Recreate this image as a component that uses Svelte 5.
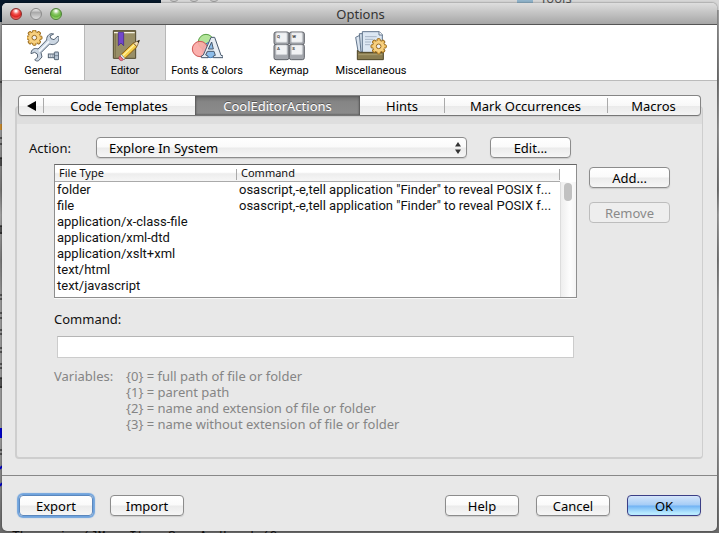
<script>
  const tabs = [
    { name: 'Code Templates', share: 152 },
    { name: 'CoolEditorActions', share: 165 },
    { name: 'Hints', share: 84 },
    { name: 'Mark Occurrences', share: 163 },
    { name: 'Macros', share: 93 }
  ];
  const categories = ['General', 'Editor', 'Fonts & Colors', 'Keymap', 'Miscellaneous'];
  const reveal = 'osascript,-e,tell application "Finder" to reveal POSIX f...';
  const rows = [
    ['folder', reveal],
    ['file', reveal],
    ['application/x-class-file', ''],
    ['application/xml-dtd', ''],
    ['application/xslt+xml', ''],
    ['text/html', ''],
    ['text/javascript', ''],
    ['text/x-java', '']
  ];
  const variables = [
    '{0} = full path of file or folder',
    '{1} = parent path',
    '{2} = name and extension of file or folder',
    '{3} = name without extension of file or folder'
  ];
  const keys = [['Q', 342, 96], ['W', 388, 96], ['A', 342, 133], ['S', 388, 133]];
  const teeth = [0, 45, 90, 135, 180, 225, 270, 315];

  let selectedTab = $state('CoolEditorActions');
  let selectedCategory = $state('Editor');
  let command = $state('');
</script>

{#snippet gear(cx, cy)}
  <g transform="translate({cx} {cy})" stroke="#9a6a1c" stroke-width="3">
    {#each teeth as a}
      <rect x="-5" y="-23" width="10" height="12" rx="3" fill="#f3c566" transform="rotate({a})" />
    {/each}
    <circle r="17" fill="#f7d080" stroke="none" />
    <circle r="7" fill="#eef1f5" stroke-width="3" />
  </g>
{/snippet}

<div class="desktop">
  <div class="backdrop" aria-hidden="true">
    <div class="dark"></div>
    <div class="dots"><i></i><i></i><i></i></div>
    <div class="folder"></div>
    <span class="tools">Tools</span>
    <svg class="edge" viewBox="0 0 2 533">
      <path d="M0 82h2M0 138h2M0 144h2M1 158v8M0 158h2M1 226v8M0 226h2M0 233h2M0 295h2M0 299h2M0 313h2M0 318h2M0 330h2M0 334h2M0 348h2M0 352h2M0 364h2M0 368h2M1 378v10M0 378h2M0 387h2M0 450h2M0 454h2" stroke="#111" />
      <path d="M0 124h2v6h-2z" fill="#c98a2c" />
      <path d="M0 430h2M1 428v10M0 469l2-3M0 486l2-3" stroke="#00c" stroke-width="2" />
    </svg>
    <span class="code">The main (JMenuItem SaveAndLoad (2</span>
  </div>

  <main class="window">
    <header class="titlebar">
      <div class="lights">
        <button class="light red" aria-label="Close"></button>
        <button class="light grey" aria-label="Minimize"></button>
        <button class="light green" aria-label="Zoom"></button>
      </div>
      <h1>Options</h1>
    </header>

    <nav class="toolbar">
      {#each categories as name}
        <button class="category" class:active={selectedCategory === name} onclick={() => (selectedCategory = name)}>
          {#if name === 'General'}
            <svg viewBox="81 90 96 96">
              {@render gear(103, 113)}
              <path d="M116 182 L126 171 L123 158 L149 132 C158 136 170 134 176 121 C178 115 177 110 174 108 L162 119 L153 116 L150 108 L161 102 C150 98 139 107 140 120 L114 147 C103 142 93 149 93 161 L104 157 L112 162 L113 171 L104 180 C108 183 112 184 116 182Z" fill="#cbd6e2" stroke="#566474" stroke-width="3" stroke-linejoin="round" />
              <path d="M117 154 L147 124" stroke="#f4f8fc" stroke-width="5" />
              <rect x="145" y="162" width="18" height="11" fill="#dde4ec" stroke="#566474" stroke-width="3" />
              <path d="M151 162v11M157 162v11" stroke="#75818f" stroke-width="2" />
              <rect x="163" y="156" width="13" height="23" rx="2" fill="#b9c7d6" stroke="#566474" stroke-width="3" />
              <path d="M165 167h10" stroke="#566474" stroke-width="2" />
            </svg>
          {:else if name === 'Editor'}
            <svg viewBox="327 90 96 96">
              <path d="M340 92h67v83h-67z" fill="#988e66" stroke="#50482c" stroke-width="3" />
              <path d="M342 98h62" stroke="#f4f1e2" stroke-width="4" />
              <path d="M342 94h64" stroke="#6f6746" stroke-width="3" />
              <path d="M346 101v72" stroke="#7b724e" stroke-width="3" />
              <path d="M355 97h16v40l-8-8-8 8z" fill="#7246cc" stroke="#3b1f86" stroke-width="2" />
              <path d="M361 166 L400 129 L411 140 L372 178Z" fill="#f7cf4a" stroke="#8a5d14" stroke-width="3" />
              <path d="M367 169 L403 134" stroke="#fff0a0" stroke-width="4" />
              <path d="M400 129 L418 121 L411 140Z" fill="#f3dfb4" stroke="#6b4a18" stroke-width="2" />
              <path d="M411 124 L419 120 L416 129Z" fill="#222" />
              <path d="M364 163 L375 175 L370 180 L360 168Z" fill="#dfe3ea" stroke="#70747c" stroke-width="2" />
              <path d="M360 168 L370 179 C365 184 358 182 357 176 C356 172 357 170 360 168Z" fill="#ef7586" stroke="#a43648" stroke-width="2" />
            </svg>
          {:else if name === 'Fonts & Colors'}
            <svg viewBox="90 90 96 96">
              <circle cx="135" cy="126" r="23" fill="#b3e59a" stroke="#58a044" stroke-width="3" />
              <circle cx="148" cy="150" r="23" fill="#8dbdea" stroke="#3e78b4" stroke-width="3" />
              <circle cx="117" cy="147" r="23" fill="#fba9a6" fill-opacity=".92" stroke="#cf5856" stroke-width="3" />
              <path d="M150 112h11l19 54 6 2v5h-29v-5l6-2-4-12h-20l-5 11 7 3v5h-20v-5l6-3z M152 126l-10 21h15z" fill="#e7edf4" fill-rule="evenodd" stroke="#495a6e" stroke-width="3" stroke-linejoin="round" />
            </svg>
          {:else if name === 'Keymap'}
            <svg viewBox="339 90 96 96">
              {#each keys as [k, x, y]}
                <rect {x} {y} width="45" height={y > 100 ? 46 : 38} rx="6" fill="#a5a8ae" stroke="#62656b" stroke-width="3" />
                <rect x={x + 6} y={y + 2} width="33" height="29" rx="3" fill="#f1f2f4" stroke="#c9cbd0" stroke-width="2" />
                <text x={x + 9} y={y + 17} font-size="13" font-weight="700" fill="#444">{k}</text>
              {/each}
            </svg>
          {:else}
            <svg viewBox="585 90 96 96">
              <path d="M587 112l14-7 10 54h-16z" fill="#dbe5f0" stroke="#62758c" stroke-width="3" />
              <path d="M598 101h20v55h-15z" fill="#d0dce9" stroke="#62758c" stroke-width="3" />
              <path d="M607 95h51l9 9v54h-60z" fill="#dce7f3" stroke="#62758c" stroke-width="3" />
              <path d="M657 95v10h11" fill="#fff" stroke="#62758c" stroke-width="3" />
              <path d="M615 110h35M615 118h25M615 126h18M615 134h15" stroke="#a7b5c6" stroke-width="3" />
              <path d="M592 151l8 6h70v22h-78z" fill="#8a7d51" stroke="#4e4527" stroke-width="3" />
              <path d="M595 164h72" stroke="#aa9d70" stroke-width="3" />
              {@render gear(656, 139)}
            </svg>
          {/if}
          <span>{name}</span>
        </button>
      {/each}
    </nav>

    <div class="tabs" role="tablist">
      <button class="scroll" aria-label="Previous tabs"><svg viewBox="0 0 9 10"><path d="M0 5l9-5v10z" /></svg></button>
      {#each tabs as tab}
        <button class="tab" role="tab" style:flex-grow={tab.share} aria-selected={selectedTab === tab.name} onclick={() => (selectedTab = tab.name)}>{tab.name}</button>
      {/each}
    </div>

    <section class="panel">
      <div class="row action">
        <label for="action">Action:</label>
        <div class="select">
          <select id="action"><option>Explore In System</option></select>
          <svg viewBox="0 0 6 12"><path d="M0 4.500l3-4.500 3 4.500zM0 7.500l3 4.500 3-4.500z" /></svg>
        </div>
        <button class="btn wide">Edit...</button>
      </div>

      <div class="row types">
        <div class="list">
          <table>
            <thead><tr><th>File Type</th><th>Command</th></tr></thead>
            <tbody>
              {#each rows as [type, cmd]}
                <tr><td>{type}</td><td>{cmd}</td></tr>
              {/each}
            </tbody>
          </table>
          <div class="track"><div class="thumb"></div></div>
        </div>
        <div class="side">
          <button class="btn wide">Add...</button>
          <button class="btn wide" disabled>Remove</button>
        </div>
      </div>

      <div class="command">
        <label for="command">Command:</label>
        <input id="command" type="text" bind:value={command} />
      </div>

      <dl>
        <dt>Variables:</dt>
        <dd>{#each variables as v}<div>{v}</div>{/each}</dd>
      </dl>
    </section>

    <footer>
      <button class="btn focused">Export</button>
      <button class="btn">Import</button>
      <span class="spacer"></span>
      <button class="btn">Help</button>
      <button class="btn">Cancel</button>
      <button class="btn default">OK</button>
    </footer>
  </main>
</div>

<style>
  .desktop {
    position: relative;
    box-sizing: border-box;
    min-height: 100vh;
    padding: 3px 2px 2px;
    display: flex;
    overflow: hidden;
    font: 13px/16px 'Noto Sans', 'Open Sans', sans-serif;
    color: #111;
    background: linear-gradient(#aaa, #777 80px, #999 130px, #777 190px, #a4a4a4 215px, #7c7c7c 260px, #999 300px, #999 440px, #686868);
  }
  .backdrop { position: absolute; inset: 0; overflow: hidden; }
  .backdrop::before { content: ''; position: absolute; inset: 0 0 auto; height: 10px; background: #d6d6d6; }
  .dark { position: absolute; left: 0; top: 0; width: 161px; height: 22px; background: #07182a; }
  .dots { position: absolute; left: 168px; top: -10px; display: flex; gap: 8px; }
  .dots i { width: 10px; height: 10px; border: 1px solid #999; border-radius: 50%; background: #ccc; }
  .folder { position: absolute; left: 517px; top: 0; width: 16px; height: 5px; background: #90b3ca; }
  .tools { position: absolute; left: 540px; top: -10px; color: #555; }
  .edge { position: absolute; left: 0; top: 0; width: 2px; height: 533px; fill: none; }
  .code { position: absolute; left: 12px; bottom: -12px; font: 13px/16px 'Liberation Mono', monospace; white-space: pre; }

  .window {
    position: relative;
    flex: 1;
    min-width: 0;
    display: flex;
    flex-direction: column;
    overflow: hidden;
    border-radius: 5px;
    background: #e8e8e8;
    box-shadow: 0 0 2px rgba(0, 0, 0, .6);
  }
  button, select, input { font: inherit; color: inherit; margin: 0; box-sizing: border-box; }
  button { padding: 0; border: 0; background: none; white-space: nowrap; }

  .titlebar {
    display: flex;
    align-items: center;
    height: 21px;
    border-top: 1px solid #eee;
    box-sizing: content-box;
    margin-top: -1px;
    border-bottom: 1px solid #555;
    background: linear-gradient(#dedede, #a6a6a6);
  }
  .lights { flex: 1 0 0; display: flex; gap: 8px; padding-left: 8px; }
  .titlebar::after { content: ''; flex: 1 0 0; padding-left: 6px; }
  h1 { margin: 0; font-size: 13px; font-weight: 400; color: #333; }
  .light { width: 12px; height: 12px; border-radius: 50%; border: 1px solid #777; }
  .red { border-color: #8a2a28; background: radial-gradient(circle at 50% 20%, #fff 5%, #f25550 35%, #dc2623 60%, #ff9a94); }
  .grey { border-color: #8a8a8a; background: linear-gradient(#eee, #aaa 35%, #ddd); }
  .green { border-color: #4b7f34; background: radial-gradient(circle at 50% 20%, #fff 5%, #8cc869 35%, #66b43e 60%, #c8f4a2); }

  .toolbar { display: flex; height: 55px; background: #fff; border-bottom: 1px solid #bbb; }
  .category {
    width: 82px;
    padding-top: 5px;
    display: flex;
    flex-direction: column;
    align-items: center;
    font: 11px/18px Roboto, sans-serif;
    color: #000;
  }
  .category svg { width: 32px; height: 32px; flex: none; }
  .category.active { background: #dcdcdc; box-shadow: inset 1px 0 #b8b8b8, inset -1px 0 #b8b8b8; }

  .tabs {
    position: relative;
    z-index: 1;
    display: flex;
    height: 19px;
    margin: 14px 16px 0;
    border: 1px solid #858585;
    border-bottom-color: #777;
    border-radius: 4px;
    background: linear-gradient(#fff, #f8f8f8 50%, #eaeaea 52%, #f4f4f4);
    box-shadow: 0 1px 1px #ccc;
    color: #000;
  }
  .tabs button { position: relative; }
  .scroll { flex: none; width: 24px; }
  .scroll svg { width: 9px; height: 10px; }
  .tab { flex: 1 1 0; }
  .tab::before { content: ''; position: absolute; left: 0; top: 2px; bottom: 2px; width: 1px; background: #aaa; }
  .tab[aria-selected='true'] {
    color: #fff;
    background: linear-gradient(#6d6d6d, #858585 30%, #8c8c8c);
    box-shadow: inset 1px 0 2px #555, inset -1px 0 2px #555;
    text-shadow: 0 -1px #555;
  }
  .tab[aria-selected='true']::before, .tab[aria-selected='true'] + .tab::before { display: none; }

  .panel {
    flex: 1;
    margin: -10px 14px 16px 13px;
    padding: 30px 32px 0 12px;
    border: 2px solid #cecece;
    border-width: 1px 1px 2px 2px;
    border-radius: 4px;
    background: linear-gradient(#dedede 17px, transparent 17px);
  }
  .row { display: flex; }
  .btn {
    width: 74px;
    height: 21px;
    border: 1px solid #8c8c8c;
    border-radius: 4px;
    background: linear-gradient(#fff, #fafafa 48%, #ebebeb 52%, #f6f6f6);
    box-shadow: 0 1px 1px rgba(0, 0, 0, .12);
    line-height: 18px;
    color: #000;
  }
  .btn.wide { width: 81px; }
  .btn:disabled { border-color: #bdbdbd; color: #8a8a8a; background: #eee; box-shadow: none; }
  .btn.focused { border-color: #5b87bd; box-shadow: 0 0 1px 2px #6fa3dd; }
  .btn.default { border-color: #3c3f86; background: linear-gradient(#d5e5fa, #a4ccf6 48%, #70b2f4 52%, #b8eaff 90%); }

  .action { align-items: center; margin-right: 99px; }
  .action label { width: 67px; }
  .select { position: relative; flex: 1; margin-right: 23px; display: flex; }
  select {
    appearance: none;
    width: 100%;
    height: 21px;
    padding: 0 24px 0 12px;
    border: 1px solid #8c8c8c;
    border-radius: 4px;
    background: linear-gradient(#fff, #fafafa 48%, #ebebeb 52%, #f6f6f6);
    box-shadow: 0 1px 1px rgba(0, 0, 0, .12);
    color: #000;
  }
  .select svg { position: absolute; right: 6px; top: 5px; width: 6px; height: 12px; fill: #333; pointer-events: none; }

  .types { margin: 6px 0 0 25px; gap: 12px; }
  .list {
    flex: 1;
    min-width: 0;
    display: flex;
    height: 132px;
    overflow: hidden;
    border: 1px solid #8e8e8e;
    border-top-color: #666;
    background: #fff;
    box-shadow: 0 1px #f8f8f8;
  }
  table { flex: 1; min-width: 0; width: 100%; table-layout: fixed; border-collapse: separate; border-spacing: 0; align-self: flex-start; }
  th, td { overflow: hidden; white-space: nowrap; text-align: left; font-weight: 400; padding: 0 2px; height: 16px; line-height: 16px; }
  td { font-family: Roboto, sans-serif; }
  th:first-child { width: 174px; }
  th {
    padding: 0 4px;
    font-size: 11px;
    border-bottom: 1px solid #aaa;
    background: linear-gradient(#aaa, #aaa) right 4px / 1px 11px no-repeat, linear-gradient(#fff 45%, #ededed 55%, #f6f6f6);
  }
  .track { flex: none; width: 16px; margin-top: 17px; border-left: 1px solid #ddd; box-sizing: border-box; background: linear-gradient(90deg, #eee, #fdfdfd 60%, #f4f4f4); }
  .thumb { width: 8px; height: 18px; margin: 1px 0 0 3px; border-radius: 4px; background: #c1c1c1; }
  .side { display: flex; flex-direction: column; gap: 14px; padding-top: 3px; }

  .command { margin: 12px 96px 0 25px; }
  .command label { display: block; line-height: 18px; }
  input {
    display: block;
    width: calc(100% - 3px);
    height: 22px;
    margin: 8px 0 0 3px;
    padding: 0 3px;
    border: 1px solid #ccc;
    border-top-color: #b5b5b5;
    border-radius: 0;
    background: #fff;
  }
  dl { display: flex; margin: 10px 0 0 25px; color: #858585; }
  dt { width: 72px; }
  dd { margin: 0; }

  footer {
    display: flex;
    align-items: center;
    gap: 17px;
    height: 56px;
    padding: 0 16px 0 17px;
    box-sizing: border-box;
    border-top: 1px solid #888;
  }
  footer .btn { flex: none; margin-top: 5px; margin-bottom: 1px; }
  .spacer { flex: 1; }
</style>
